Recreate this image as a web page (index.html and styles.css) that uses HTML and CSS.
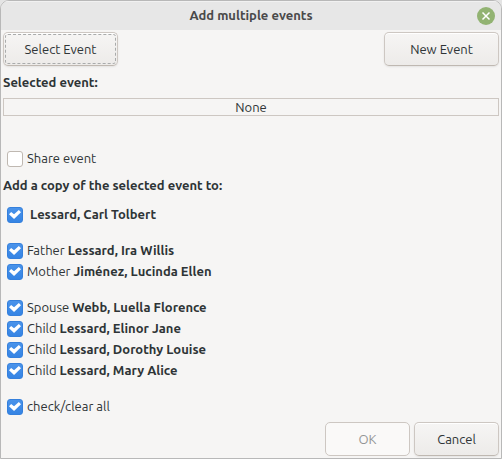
FILE: index.html
```html
<!DOCTYPE html>
<html lang="en">
<head>
<meta charset="utf-8">
<title>Add multiple events</title>
<link rel="stylesheet" href="styles.css">
</head>
<body>
<main class="dialog">
  <header class="titlebar">
    <h1 class="title">Add multiple events</h1>
    <button class="close" type="button" aria-label="Close">
      <svg viewBox="0 0 18 18" width="18" height="18" aria-hidden="true">
        <circle cx="9" cy="9" r="9" fill="#92b372"/>
        <path d="M5.5 5.5l7 7M12.5 5.5l-7 7" stroke="#fff" stroke-width="1.5" fill="none"/>
      </svg>
    </button>
  </header>
  <form class="content">
    <div class="toolbar">
      <button class="btn wide focused" type="button">Select Event</button>
      <button class="btn wide" type="button">New Event</button>
    </div>
    <h2 class="label">Selected event:</h2>
    <output class="selection">None</output>
    <div class="group share">
      <label class="check"><input type="checkbox"><span>Share event</span></label>
    </div>
    <h2 class="label">Add a copy of the selected event to:</h2>
    <div class="group self">
      <label class="check"><input type="checkbox" checked><span>&nbsp;<b>Lessard, Carl Tolbert</b></span></label>
    </div>
    <div class="group">
      <label class="check"><input type="checkbox" checked><span>Father <b>Lessard, Ira Willis</b></span></label>
      <label class="check"><input type="checkbox" checked><span>Mother <b>Jiménez, Lucinda Ellen</b></span></label>
    </div>
    <div class="group">
      <label class="check"><input type="checkbox" checked><span>Spouse <b>Webb, Luella Florence</b></span></label>
      <label class="check"><input type="checkbox" checked><span>Child <b>Lessard, Elinor Jane</b></span></label>
      <label class="check"><input type="checkbox" checked><span>Child <b>Lessard, Dorothy Louise</b></span></label>
      <label class="check"><input type="checkbox" checked><span>Child <b>Lessard, Mary Alice</b></span></label>
    </div>
    <div class="group">
      <label class="check"><input type="checkbox" checked><span>check/clear all</span></label>
    </div>
    <div class="actions">
      <button class="btn" type="button" disabled>OK</button>
      <button class="btn" type="button">Cancel</button>
    </div>
  </form>
</main>
</body>
</html>
```

FILE: styles.css
```css
* { box-sizing: border-box; }
body {
  margin: 0;
  background: #e4e4e4;
  color: #2e3436;
  font: 13px/21px Ubuntu, "Open Sans", "Noto Sans", sans-serif;
}
.dialog {
  min-height: 100vh;
  display: flex;
  flex-direction: column;
  border: 1px solid #b8b8b8;
  border-radius: 9px 9px 0 0;
  background: #f6f5f4;
  overflow: hidden;
}
.titlebar {
  height: 29px;
  flex: none;
  display: grid;
  grid-template-columns: 1fr auto 1fr;
  align-items: center;
  padding: 0 6px;
  background: #e7e7e7;
  box-shadow: inset 0 1px #f1f1f1;
}
.title {
  grid-column: 2;
  margin: 0;
  font-size: 13px;
  font-weight: 600;
  color: #4a4a4a;
}
.close {
  justify-self: end;
  display: flex;
  padding: 0;
  border: 0;
  background: none;
}
.content {
  flex: 1;
  display: flex;
  flex-direction: column;
  padding: 2px;
}
.toolbar {
  display: flex;
  justify-content: space-between;
}
.btn {
  width: 85px;
  height: 34px;
  padding: 0;
  font: inherit;
  color: inherit;
  border: 1px solid #cdc7c2;
  border-bottom-color: #bfb8b1;
  border-radius: 5px;
  background: linear-gradient(#f6f5f4, #edebe9);
  box-shadow: inset 0 1px #fff, 0 1px 2px rgba(0, 0, 0, 0.08);
}
.btn.wide { width: 115px; }
.btn.focused {
  outline: 1px dashed #a9abab;
  outline-offset: -3px;
}
.btn:disabled {
  color: #929595;
  border-color: #cdc7c2;
  background: #faf9f8;
  box-shadow: none;
}
.label {
  margin: 6px 0 0;
  font-size: 13px;
  line-height: 21px;
  font-weight: 700;
}
.selection {
  display: block;
  margin-top: 5px;
  border: 1px solid #cdc7c2;
  line-height: 16px;
  text-align: center;
}
.group {
  display: flex;
  flex-direction: column;
  align-items: flex-start;
  margin-top: 15px;
  padding-left: 4px;
}
.group.share { margin-top: 32px; }
.group.self { margin-top: 8px; }
.check {
  display: flex;
  align-items: center;
  gap: 4px;
}
.check input {
  appearance: none;
  width: 16px;
  height: 16px;
  margin: 0;
  border: 1px solid #bfb8b1;
  border-radius: 3px;
  background: #fff;
}
.check input:checked {
  border-color: #3580dc;
  background: linear-gradient(#4a93ea, #3584e4);
  display: grid;
  place-items: center;
}
.check input:checked::before {
  content: "";
  width: 12px;
  height: 9px;
  background: #fff;
  clip-path: polygon(0 47%, 18% 22%, 42% 48%, 82% 0, 100% 24%, 42% 100%);
}
.actions {
  display: flex;
  justify-content: flex-end;
  gap: 4px;
  margin-top: auto;
  padding-top: 5px;
}
```
